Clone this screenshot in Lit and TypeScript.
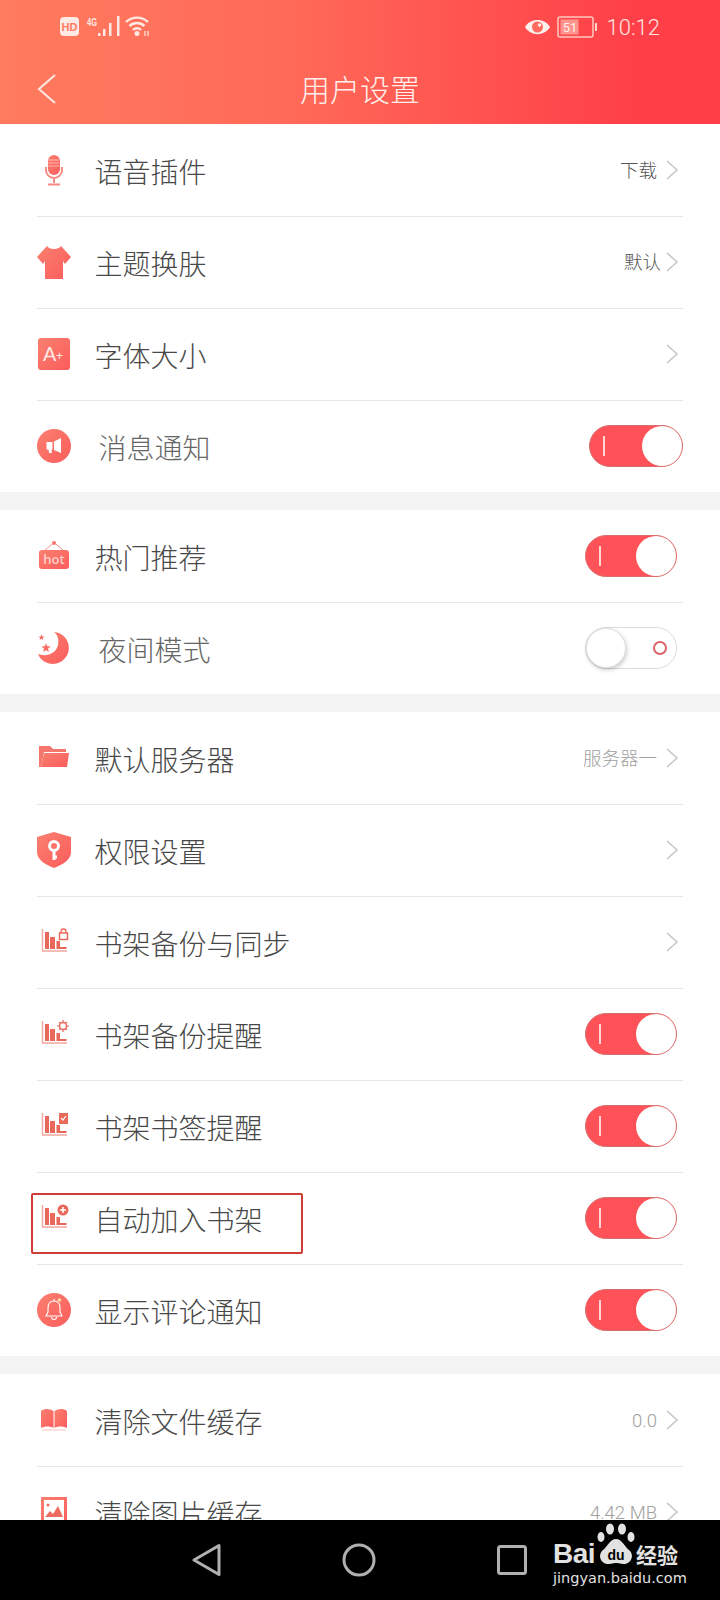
import { LitElement, html, svg, css, nothing } from 'lit';
import { customElement } from 'lit/decorators.js';

const G = 'url(#g)';

function star(cx: number, cy: number, r: number) {
  const pts: string[] = [];
  for (let i = 0; i < 10; i++) {
    const rad = i % 2 ? r * 0.42 : r;
    const a = (Math.PI / 5) * i - Math.PI / 2;
    pts.push(`${(cx + rad * Math.cos(a)).toFixed(1)},${(cy + rad * Math.sin(a)).toFixed(1)}`);
  }
  return svg`<polygon points=${pts.join(' ')} fill=${G}></polygon>`;
}

function bars(badge: unknown) {
  return svg`
    <path d="M6.500 5v22H31" fill="none" stroke="#f3a79f" stroke-width="1.400"></path>
    <path d="M9 8h4v17H9zM14 13h5v12h-5zM20.500 17h3.500v8h-3.500zM24 23h6.500v2H24z" fill="#e8695c"></path>
    ${badge}`;
}

const icons: Record<string, unknown> = {
  mic: svg`
    <rect x="12" y="3" width="12" height="20" rx="6" fill=${G}></rect>
    <path d="M12.500 8h11M12.500 11h11M12.500 14h11" stroke="#ffc9c3" stroke-width="0.800"></path>
    <path d="M10 15v3a8 8 0 0 0 16 0v-3M18 26v5" fill="none" stroke="#f58a80" stroke-width="2"></path>
    <path d="M12 32.500h12" stroke="#f58a80" stroke-width="2"></path>`,
  shirt: svg`<path d="M11 2C13 6 23 6 25 2L35 13L29 20L27 17V35H9V17L7 20L1 13Z" fill=${G}></path>`,
  font: svg`
    <rect x="2" y="2" width="32" height="32" rx="3" fill=${G}></rect>
    <text x="7" y="25" font-size="20" font-family="Liberation Sans" fill="#ffe9e5">A</text>
    <text x="20" y="24" font-size="12" font-family="Liberation Sans" fill="#ffe9e5">+</text>`,
  horn: svg`
    <circle cx="18" cy="18" r="17" fill=${G}></circle>
    <path d="M10.500 14H16.500V21.500H15.500L16 25H13L12.500 21.500H10.500ZM18 13.500L25 10V25L18 22Z" fill="#fff"></path>`,
  hot: svg`
    <rect x="3" y="12" width="30" height="19" rx="3" fill=${G}></rect>
    <path d="M9 12L18 4.500L27 12" fill="none" stroke="#f4918a" stroke-width="1"></path>
    <circle cx="18" cy="5" r="2" fill="#f2766c"></circle>
    <text x="18" y="26" text-anchor="middle" font-size="13" font-weight="600" font-family="Open Sans" fill="#ffd0ca">hot</text>`,
  moon: svg`
    <path d="M18 2A16 16 0 1 1 2 24C10 27 20 24 22 15C23 10 22 5 18 2Z" fill=${G}></path>
    ${star(10, 18, 5)}${star(5.5, 7.5, 3.2)}`,
  folder: svg`
    <path d="M3 6H14L17 9H30V12H8L5 27H3Z" fill="#f4766c"></path>
    <path d="M8 13H33L31 27H5Z" fill=${G}></path>`,
  shield: svg`
    <path d="M18 0L35 5V20C35 28 26 33 18 36C10 33 1 28 1 20V5Z" fill=${G}></path>
    <circle cx="18" cy="14" r="4.500" fill="none" stroke="#fff" stroke-width="3"></circle>
    <path d="M18 18.500V28M18 25h3" stroke="#fff" stroke-width="3" fill="none"></path>`,
  lock: bars(svg`
    <rect x="23.500" y="9" width="8" height="6.500" fill="#fff" stroke="#e8695c" stroke-width="1.500"></rect>
    <path d="M25 9V7.500a2.500 2.500 0 0 1 5 0V9" fill="none" stroke="#e8695c" stroke-width="1.300"></path>`),
  gear: bars(svg`
    <circle cx="27" cy="10" r="3.500" fill="#fff" stroke="#e8695c" stroke-width="1.500"></circle>
    <path d="M27 4v2M27 14v2M21 10h2M31 10h2M23 6l1.500 1.500M29.500 12.500L31 14M31 6l-1.500 1.500M24.500 12.500L23 14" stroke="#e8695c" stroke-width="1.200"></path>`),
  mark: bars(svg`
    <rect x="23" y="5" width="9" height="11" fill="#e8695c"></rect>
    <path d="M25 10l2 2 3-4" fill="none" stroke="#fff" stroke-width="1.200"></path>`),
  plus: bars(svg`
    <circle cx="27" cy="10" r="5.500" fill="#e8695c"></circle>
    <path d="M24 10h6M27 7v6" stroke="#fff" stroke-width="1.500"></path>`),
  bell: svg`
    <circle cx="18" cy="18" r="17" fill=${G}></circle>
    <path d="M18 9c-4 0-6 3-6 7v4l-2 4h16l-2-4v-4c0-4-2-7-6-7ZM18 7v2M15.500 25a2.500 2.500 0 0 0 5 0" fill="none" stroke="#fff" stroke-width="1.100"></path>
    <circle cx="23.500" cy="8" r="1.800" fill="#ffd9a0"></circle>`,
  book: svg`
    <path d="M5 9C9 6 14 7 17.500 9V26C14 24 9 24 5 26Z" fill=${G}></path>
    <path d="M31 9C27 6 22 7 18.500 9V26C22 24 27 24 31 26Z" fill=${G}></path>
    <path d="M6 28H30" stroke="#f9c4bd" stroke-width="1"></path>`,
  picture: svg`
    <rect x="5" y="3" width="26" height="28" fill=${G}></rect>
    <rect x="8" y="6" width="20" height="20" fill="#fff"></rect>
    <path d="M9 23L14 17L17 20L22 12L27 23Z" fill="#ef6a60"></path>
    <circle cx="12" cy="11" r="1.500" fill="#ef6a60"></circle>`,
};

type Row = {
  icon: string;
  label: string;
  value?: string;
  muted?: boolean;
  tight?: boolean;
  chevron?: boolean;
  toggle?: 'on' | 'off';
  shifted?: boolean;
  marked?: boolean;
};

const sections: Row[][] = [
  [
    { icon: 'mic', label: '语音插件', value: '下载', chevron: true },
    { icon: 'shirt', label: '主题换肤', value: '默认', tight: true, chevron: true },
    { icon: 'font', label: '字体大小', chevron: true },
    { icon: 'horn', label: '消息通知', toggle: 'on', shifted: true },
  ],
  [
    { icon: 'hot', label: '热门推荐', toggle: 'on' },
    { icon: 'moon', label: '夜间模式', toggle: 'off' },
  ],
  [
    { icon: 'folder', label: '默认服务器', value: '服务器一', muted: true, chevron: true },
    { icon: 'shield', label: '权限设置', chevron: true },
    { icon: 'lock', label: '书架备份与同步', chevron: true },
    { icon: 'gear', label: '书架备份提醒', toggle: 'on' },
    { icon: 'mark', label: '书架书签提醒', toggle: 'on' },
    { icon: 'plus', label: '自动加入书架', toggle: 'on', marked: true },
    { icon: 'bell', label: '显示评论通知', toggle: 'on' },
  ],
  [
    { icon: 'book', label: '清除文件缓存', value: '0.0', muted: true, chevron: true },
    { icon: 'picture', label: '清除图片缓存', value: '4.42 MB', muted: true, chevron: true },
  ],
];

@customElement('app-root')
export class AppRoot extends LitElement {
  static styles = css`
    :host {
      display: flex;
      flex-direction: column;
      height: 1600px;
      background: #fff;
      font-family: 'Noto Sans CJK SC', 'Noto Sans', sans-serif;
      overflow: hidden;
    }
    .defs {
      position: absolute;
      width: 0;
      height: 0;
    }

    .top {
      height: 124px;
      flex: none;
      color: #fff;
      background: linear-gradient(90deg, #ff7b5f 0%, #ff6a58 40%, #ff3e48 90%);
    }
    .status {
      height: 54px;
      display: flex;
      justify-content: space-between;
      align-items: center;
      padding: 0 60px;
    }
    .status-group {
      display: flex;
      align-items: center;
    }
    .time {
      font-family: Roboto, sans-serif;
      font-weight: 300;
      font-size: 22px;
      margin-left: 9px;
      color: #ffe6e0;
    }
    .bar {
      height: 67px;
      padding: 0 37px 3px;
      display: grid;
      grid-template-columns: 1fr auto 1fr;
      align-items: center;
    }
    .back {
      display: block;
      margin-top: 3px;
    }
    .title {
      font-size: 30px;
      font-weight: 300;
      color: #fff0ec;
      line-height: 1;
    }

    .list {
      flex: 1;
      min-height: 0;
      overflow: hidden;
      background: #f4f4f4;
      display: flex;
      flex-direction: column;
      gap: 18px;
    }
    .section {
      background: #fff;
      flex: none;
    }
    .row {
      position: relative;
      height: 92px;
      margin: 0 37px;
      display: flex;
      align-items: center;
      box-shadow: 0 1px 0 #e6e6e6;
    }
    .row.last {
      box-shadow: none;
    }
    .icon {
      width: 36px;
      height: 36px;
      flex: none;
      overflow: visible;
      margin-left: -1px;
    }
    .label {
      margin-left: 22.500px;
      flex: 1;
      font-size: 28px;
      font-weight: 300;
      color: #484848;
      line-height: 1;
      padding-top: 1px;
    }
    .label.shifted {
      margin-left: 26.500px;
      color: #666;
    }
    .value {
      font-size: 18.500px;
      font-weight: 300;
      color: #555;
      line-height: 1;
      padding-top: 3px;
      font-family: Roboto, 'Noto Sans CJK SC', sans-serif;
    }
    .value.muted {
      color: #a0a0a0;
    }
    .chevron {
      margin: 0 5px 0 9px;
      display: block;
      flex: none;
    }
    .value.tight + .chevron {
      margin-left: 5px;
    }

    .toggle {
      position: relative;
      width: 92px;
      height: 42px;
      box-sizing: border-box;
      border-radius: 21px;
      margin-right: 6px;
      flex: none;
    }
    .toggle.flush {
      width: 94px;
      margin-right: 0;
    }
    .toggle.on {
      background: #ff5258;
      border: 1px solid #d9706f;
    }
    .toggle.on::before {
      content: '';
      position: absolute;
      left: 13px;
      top: 10px;
      width: 1.500px;
      height: 20px;
      background: #ffd6d4;
    }
    .toggle.on::after {
      content: '';
      position: absolute;
      right: 0;
      top: 0;
      width: 40px;
      height: 40px;
      border-radius: 50%;
      background: #fff;
    }
    .toggle.off {
      background: #fff;
      border: 1px solid #dcdcdc;
    }
    .toggle.off::before {
      content: '';
      position: absolute;
      left: 0;
      top: 0;
      width: 38px;
      height: 38px;
      border-radius: 50%;
      background: #fff;
      border: 1px solid #e0e0e0;
      box-shadow: 1px 2px 4px rgba(0, 0, 0, 0.2);
    }
    .toggle.off::after {
      content: '';
      position: absolute;
      right: 9px;
      top: 12.500px;
      width: 10px;
      height: 10px;
      border-radius: 50%;
      border: 2.500px solid #d9636a;
    }

    .note {
      position: absolute;
      left: -6px;
      top: 21px;
      width: 272px;
      height: 61px;
      box-sizing: border-box;
      border: 2px solid #cf3d36;
      border-radius: 2px;
    }

    .nav {
      position: relative;
      height: 80px;
      flex: none;
      background: #000;
      display: flex;
      align-items: center;
      gap: 119px;
      padding-left: 189px;
    }
    .nav svg {
      display: block;
    }
    .mark {
      position: absolute;
      left: 553px;
      top: 2px;
      width: 130px;
      color: #e2e2e2;
      font-family: 'Liberation Sans', sans-serif;
    }
    .mark-top {
      display: flex;
      align-items: flex-end;
      height: 44px;
    }
    .bai {
      font-size: 28px;
      font-weight: 700;
      line-height: 24px;
      letter-spacing: -0.500px;
    }
    .jing {
      font-family: 'Noto Sans CJK SC', sans-serif;
      font-size: 21px;
      font-weight: 700;
      line-height: 24px;
      white-space: nowrap;
    }
    .paw {
      display: block;
      margin: 0 1px 0 2px;
    }
    .site {
      font-family: 'DejaVu Sans', sans-serif;
      font-size: 14.500px;
      line-height: 18px;
      margin-top: 3px;
      white-space: nowrap;
    }
  `;

  private renderEnd(row: Row) {
    if (row.toggle) {
      const flush = row.shifted && row.toggle === 'on' ? 'flush' : '';
      return html`<div class="toggle ${row.toggle} ${flush}"></div>`;
    }
    return html`
      ${row.value
        ? html`<span class="value ${row.muted ? 'muted' : ''} ${row.tight ? 'tight' : ''}">${row.value}</span>`
        : nothing}
      <svg class="chevron" width="12" height="20" viewBox="0 0 12 20">
        <path d="M1 1l10 9-10 9" fill="none" stroke="#c8c8c8" stroke-width="1.600"></path>
      </svg>
    `;
  }

  private renderRow(row: Row, last: boolean) {
    const labelShift = row.shifted || row.toggle === 'off';
    return html`
      <div class="row ${last ? 'last' : ''}">
        <svg class="icon" viewBox="0 0 36 36">${icons[row.icon]}</svg>
        <span class="label ${labelShift ? 'shifted' : ''}">${row.label}</span>
        ${this.renderEnd(row)}
        ${row.marked ? html`<div class="note"></div>` : nothing}
      </div>
    `;
  }

  private renderStatus() {
    return html`
      <div class="status">
        <div class="status-group">
          <svg width="92" height="22" viewBox="0 0 92 22">
            <rect x="0" y="1" width="19" height="19" rx="4" fill="#ffe9e4"></rect>
            <text x="9.500" y="15" text-anchor="middle" font-size="11" font-weight="700" font-family="Liberation Sans" fill="#ff7a60">HD</text>
            <text x="27" y="10" font-size="11" font-weight="700" font-family="Liberation Sans" textLength="10" lengthAdjust="spacingAndGlyphs" fill="#ffe9e4">4G</text>
            <path d="M38 17h2.500v3H38zM43 13h2.500v7H43zM49 7h2.500v13H49zM57 0h2.500v20H57z" fill="#ffe9e4"></path>
            <path d="M66 6a16 16 0 0 1 22 0M69.500 10a11 11 0 0 1 15 0M73 14a5.500 5.500 0 0 1 8 0" fill="none" stroke="#ffe9e4" stroke-width="2.400"></path>
            <circle cx="77" cy="17.500" r="2.500" fill="#ffe9e4"></circle>
            <path d="M85 15v5M88 15v5" stroke="#ffe9e4" stroke-width="1.200"></path>
          </svg>
        </div>
        <div class="status-group">
          <svg width="73" height="22" viewBox="0 0 73 22">
            <path d="M0 11C5 1.500 20 1.500 25 11C20 20.500 5 20.500 0 11Z" fill="#fff0ec"></path>
            <circle cx="12.500" cy="11" r="5.500" fill="#ff6a5e"></circle>
            <circle cx="14.500" cy="9" r="1.800" fill="#fff0ec"></circle>
            <rect x="33" y="1" width="35" height="20" rx="2" fill="none" stroke="#ffc9c0" stroke-width="1.500"></rect>
            <rect x="35.500" y="3.500" width="18" height="15" fill="#ffb3aa" opacity="0.7"></rect>
            <text x="45" y="16" text-anchor="middle" font-size="13" font-family="Roboto" fill="#fff0ec">51</text>
            <rect x="70" y="7" width="2" height="8" fill="#ffd6cf"></rect>
          </svg>
          <span class="time">10:12</span>
        </div>
      </div>
    `;
  }

  render() {
    return html`
      <svg class="defs">
        <defs>
          <linearGradient id="g" x1="0" y1="0" x2="1" y2="1">
            <stop offset="0" stop-color="#f9806f"></stop>
            <stop offset="1" stop-color="#fc5c5c"></stop>
          </linearGradient>
        </defs>
      </svg>
      <div class="top">
        ${this.renderStatus()}
        <div class="bar">
          <svg class="back" width="19" height="30" viewBox="0 0 19 30">
            <path d="M18 1L2 15l16 14" fill="none" stroke="#ffe9e4" stroke-width="2"></path>
          </svg>
          <div class="title">用户设置</div>
          <span></span>
        </div>
      </div>
      <div class="list">
        ${sections.map(
          (rows, s) => html`
            <div class="section">
              ${rows.map((row, i) => this.renderRow(row, i === rows.length - 1 && s < sections.length - 1))}
            </div>
          `,
        )}
      </div>
      <div class="nav">
        <svg width="34" height="36" viewBox="0 0 34 36">
          <path d="M5 18L30 3.500V32.500Z" fill="none" stroke="#b0b0b0" stroke-width="3" stroke-linejoin="round"></path>
        </svg>
        <svg width="34" height="34" viewBox="0 0 34 34">
          <circle cx="17" cy="17" r="15" fill="none" stroke="#b0b0b0" stroke-width="3"></circle>
        </svg>
        <svg width="34" height="34" viewBox="0 0 34 34">
          <rect x="3.500" y="3.500" width="27" height="27" rx="2" fill="none" stroke="#b0b0b0" stroke-width="3"></rect>
        </svg>
        <div class="mark">
          <div class="mark-top">
            <span class="bai">Bai</span>
            <svg class="paw" width="38" height="44" viewBox="0 0 38 44">
              <ellipse cx="4" cy="15" rx="3.500" ry="5" fill="#e2e2e2"></ellipse>
              <ellipse cx="13" cy="7" rx="4" ry="5.500" fill="#e2e2e2"></ellipse>
              <ellipse cx="25" cy="7" rx="4" ry="5.500" fill="#e2e2e2"></ellipse>
              <ellipse cx="34" cy="15" rx="3.500" ry="5" fill="#e2e2e2"></ellipse>
              <path d="M19 17C25 17 27 24 32 28C38 33 34 42 27 42C23 42 22 41 19 41C16 41 15 42 11 42C4 42 0 33 6 28C11 24 13 17 19 17Z" fill="#e2e2e2"></path>
              <text x="19" y="38" text-anchor="middle" font-size="14" font-weight="700" font-family="Liberation Sans" fill="#000">du</text>
            </svg>
            <span class="jing">经验</span>
          </div>
          <div class="site">jingyan.baidu.com</div>
        </div>
      </div>
    `;
  }
}

declare global {
  interface HTMLElementTagNameMap {
    'app-root': AppRoot;
  }
}
